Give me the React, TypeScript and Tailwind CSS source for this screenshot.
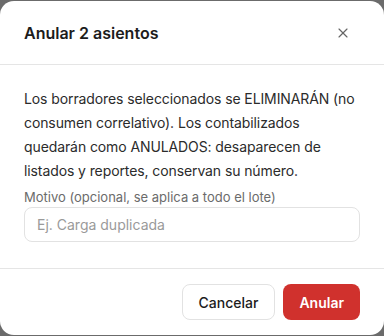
import { X } from 'lucide-react';

export default function App() {
  return (
    <div className="h-[336px] w-[384px] overflow-hidden bg-[#6b6b6b] pt-px font-['Inter',sans-serif]">
      <div className="flex h-[334px] flex-col rounded-[14px] bg-white">
        {/* Header */}
        <div className="flex h-[64px] shrink-0 items-center justify-between border-b border-[#e5e5e5] pl-6 pr-[33px]">
          <h2 className="text-[16px] font-semibold text-[#1c1c1c]">Anular 2 asientos</h2>
          <button className="text-[#666666]">
            <X size={16} strokeWidth={1.75} />
          </button>
        </div>

        {/* Body */}
        <div className="flex-1 px-6 pt-[22px]">
          <p className="text-[14px] leading-[24px] tracking-[-0.1px] text-[#2b2b2b]">
            Los borradores seleccionados se ELIMINARÁN (no consumen correlativo). Los contabilizados
            quedarán como ANULADOS: desaparecen de listados y reportes, conservan su número.
          </p>
          <label className="mt-[7px] block text-[13px] leading-[14px] text-[#6b6b6b]">
            Motivo (opcional, se aplica a todo el lote)
          </label>
          <input
            placeholder="Ej. Carga duplicada"
            className="mt-[3px] h-[35px] w-full rounded-lg border border-[#e2e2e2] px-3 text-[14px] text-[#2b2b2b] outline-none placeholder:text-[#9a9a9a]"
          />
        </div>

        {/* Footer */}
        <div className="flex h-[67px] shrink-0 items-center justify-end gap-2 border-t border-[#e5e5e5] px-6">
          <button className="h-[36px] rounded-lg border border-[#e2e2e2] bg-white px-4 text-[14px] font-medium text-[#1c1c1c]">
            Cancelar
          </button>
          <button className="h-[36px] rounded-lg bg-[#d0312d] px-4 text-[14px] font-semibold text-white">
            Anular
          </button>
        </div>
      </div>
    </div>
  );
}
